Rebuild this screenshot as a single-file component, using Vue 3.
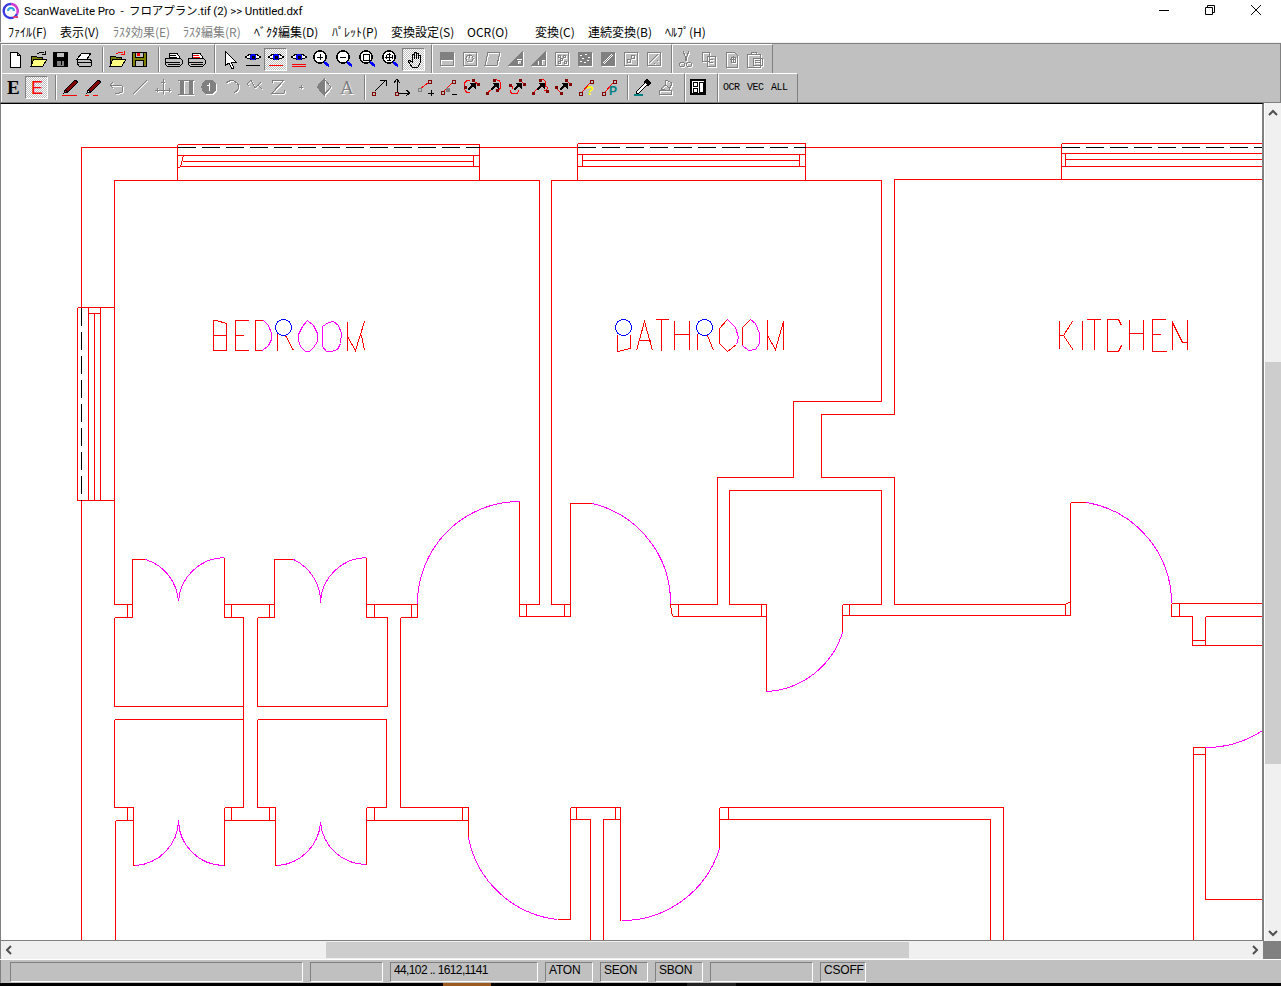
<script setup>
const P = (d, s = '#000', f = 'none', w = 1) => ({ d, s, f, w })
const K = (d, s = '#fff') => ({ d, s, f: 'none', w: 1, k: true })
const T = (t, x, y, size, f = '#000', weight = 400, fam = 'Liberation Sans') => ({ t, x, y, size, f, weight, fam })
const node = (x, y) => `M${x} ${y}h3v3h-3z`

const floppy = (body, dot) => [
  P('M2 3h14v14H2z', '#000', body), P('M5 3h8v5H5z', '#000', '#c0c0c0'), P('M5 11h8v6H5z', '#000', '#c0c0c0'),
  ...(dot ? [P('M7 4h2v2H7z', '#f00', '#f00')] : [P('M5 11h8v6H5zM10 12v4', '#000', '#808080')])
]
const folder = (c) => [
  P('M3 17V8l1-1h4l1 1h5v2', '#000', '#808000'), P('M3 17l3-7h13l-4 7z', '#000', '#ffff80'),
  P('M9 5q4-3 7-1M17 2v3h-3', c)
]
const printer = (c) => [
  P('M6 9V4h8l3 5', '#000', '#fff'), P('M7 6h6M7 8h7', c),
  P('M2 10l3-1h12l2 2v4l-2 2H4l-2-2z', '#000', '#c0c0c0'), P('M3 13h14M5 15h12', '#000')
]
const eye = (lines) => [
  P('M2 8q8-6 16 0q-8 5-16 0z', '#000', '#fff'), P('M10 5a3 3 0 1 0 .01 0z', '#00f', '#00f'),
  P('M9 7h2v2H9z', '#000', '#000'), ...lines
]
const lens = (inner) => [
  P('M8 2a6 6 0 1 0 .01 0z', '#000', '#fff', 1.5), P('M12 13l5 4', '#00f', 'none', 2.5), P(inner, '#000')
]
const curveArrow = (curve, nodes) => [
  P(curve, '#f00'), P(nodes, '#800000', '#800000'),
  P('M7 13L11 9', '#000', 'none', 2), P('M9 6h5v5z', '#000', '#000')
]
const redLine = [P(node(3, 15) + node(14, 3), '#800000'), P('M6 15L14 6', '#f00')]

const ic = {
  new: [P('M5 3h7l3 3v12H5zM12 3v3h3', '#000', '#fff')],
  open: folder('#000'), openr: folder('#f00'), save: floppy('#000'), saver: floppy('#808000', true),
  scan: [P('M3 10l5-6h9l-4 6z', '#000', '#fff'), P('M3 10h12l3 2-1 5H5l-2-3z', '#000', '#c0c0c0'), P('M4 13h13', '#000')],
  print: printer('#000'), print2: printer('#f00'),
  arrow: [P('M5 2v15l4-3 3 6 2-1-3-6h5z', '#000', '#fff')],
  eye1: eye([P('M3 16h14')]), eye2: eye([P('M3 16h14', '#f00')]), eye3: eye([P('M3 15h14M3 17h14', '#f00')]),
  zin: lens('M5 8h6M8 5v6'), zout: lens('M5 8h6'), zbox: lens('M5 5h6v6H5z'), zall: lens('M4 8h8M8 4v8M6 5h4M6 11h4M5 6v4M11 6v4'),
  hand: [P('M8 18l-4-6 1-1 3 2V5h2v5V3h2v7V4h2v6V6h2v8l-2 4z', '#000')],
  d1: [P('M3 3h13v7H3z', '#000', '#000'), P('M3 3h13v13H3z')],
  d2: [P('M3 3h13v13H3zM9.5 6a3.5 3.5 0 1 0 .01 0zM9 5v4')], d3: [P('M5 3h12l-3 13H2z')],
  d4: [P('M3 16L16 3v6h-6v7z', '#000', '#000'), P('M3 16h13V3M11 11h4v4h-4z')],
  d5: [P('M3 16L16 3v7h-4v6h-2v-5H8v5z', '#000', '#000'), P('M3 16h13V3')],
  d6: [P('M3 3h13v13H3zM6 6h2v2H6zM11 6h2v2h-2zM8 9h2v2H8zM6 12h2v2H6zM12 12h2v2h-2z')],
  d7: [P('M3 3h13v13H3z', '#000', '#000'), K('M5 6h2M10 5h2M13 8h2M7 9h2M12 11h2M5 12h2M9 13h2')],
  d8: [P('M3 3h13v13H3z', '#000', '#000'), K('M5 14L14 5M6 15L15 6')],
  d9: [P('M3 3h13v13H3zM10 6h3v3h-3zM6 10h3v3H6z')],
  d10: [P('M3 3h13v13H3zM5 14L14 5M10 14h1M13 11h1')],
  cut: [P('M7 2l4 10M13 2L9 12M6 13a2.5 2.5 0 1 0 .01 0zM13 13a2.5 2.5 0 1 0 .01 0z')],
  copy: [P('M3 3h7v9H3zM8 7h8v10H8zM10 10h4M10 13h4')],
  paste: [P('M4 3h8l3 3v12H4zM9 8h4v5H9zM11 7v7M8 10h6')],
  clip: [P('M2 5h13v13H2zM6 3h5v2H6zM8 9h9v7H8zM10 11h5M10 13h5')],
  ebold: [T('E', 3, 17, 19, '#000', 700, 'Liberation Serif')],
  ered: [T('E', 4, 17, 18, '#f00')],
  pen: [P('M4 13L14 3l3 2L7 15z', '#000', '#800000'), P('M4 13l-1 3 4-1z', '#000', '#f00'), P('M1 18h15', '#f00')],
  pen2: [P('M4 13L14 3l3 2L7 15z', '#000', '#800000'), P('M4 13l-1 3 4-1z', '#000', '#fff'), P('M1 18h4M9 18h5', '#f00')],
  undo: [P('M3 8h9q4 0 4 4t-4 4H8M6 5L3 8l3 3')], line: [P('M3 17L17 3')], cross: [P('M10 2v15M2 13h16M4 11v4M16 11v4M8 5h4')],
  rbar: [P('M4 3h3v14H4zM13 3h3v14h-3z', '#000', '#000'), P('M2 3h16M2 17h16')],
  circ: [P('M10 3a7 7 0 1 0 .01 0z', '#000', '#000'), K('M10 6v8M8 8h2')],
  arc: [P('M4 6q6-5 11 0t-3 10')], wave: [P('M2 7l4-4 4 8 3-3 4 4M2 7l2 2M13 8l3-3')],
  zed: [P('M4 3h12L4 16h12M4 3v3M16 16v-3')], plus: [P('M10 8v4M8 10h4')],
  diamond: [P('M10 2L3 10l7 8z', '#000', '#000'), P('M10 2l7 8-7 8')],
  aa: [T('A', 3, 17, 19, '#000', 400, 'Liberation Serif')],
  n1: [P(node(3, 15), '#800000'), P('M6 14L17 3M11 3h6v6')],
  n2: [P(node(3, 15), '#800000'), P('M5 15V3M6 16h12M2 6l3-4 3 4M14 13l4 3-4 3')],
  n3: [P(node(3, 11), '#808080'), P(node(13, 3), '#800000'), P('M6 11l7-5', '#f00'), P('M13 16h6M16 13v6')],
  n4: [P(node(3, 14), '#800000'), P(node(14, 3), '#800000'), P('M6 14l8-8', '#f00'), P('M8 11h3v3H8z', '#808080', '#808080'), P('M14 17h5')],
  c1: curveArrow('M9 3Q3 3 3 9Q3 16 9 16M11 3L17 7', 'M11 2h2v2h-2zM16 6h2v2h-2zM3 9h2v2H3z'),
  c2: curveArrow('M3 16L8 12M10 3Q17 2 17 8Q17 13 13 13', 'M2 15h2v2H2zM9 2h2v2H9zM12 12h2v2h-2z'),
  c3: curveArrow('M2 8Q6 8 6 12M3 13Q3 17 8 17Q12 17 11 13M13 3L17 7', 'M2 7h2v2H2zM12 2h2v2h-2zM16 6h2v2h-2z'),
  c4: curveArrow('M3 16L7 12M10 3Q15 1 16 6Q14 9 17 10Q18 14 14 14', 'M2 15h2v2H2zM9 2h2v2H9zM16 13h2v2h-2z'),
  c5: curveArrow('M2 10L7 15M13 3L17 7', 'M2 9h2v2H2zM7 15h2v2H7zM12 2h2v2h-2zM16 6h2v2h-2z'),
  n5: [...redLine, T('?', 10, 18, 13, '#ffff00', 700)],
  n6: [...redLine, T('P', 10, 18, 12, '#008080', 700)],
  dropper: [P('M11 5l3-3 4 4-3 3z', '#000', '#000'), P('M12 6l-8 8-1 3 3-1 8-8', '#000', '#fff'), P('M1 18h9', '#008080', 'none', 2)],
  stamp: [P('M10 3l6 3-2 5-5-3zM5 12l4-4 5 3-1 3zM3 13h12v4H3z')],
  layout: [P('M3 3h14v14H3z', '#000', '#fff', 2), P('M5 5h4v4H5zM5 11h4v4H5zM11 5h4v10h-4z', '#000', '#fff')]
}

const off = new Set(['d1', 'd2', 'd3', 'd4', 'd5', 'd6', 'd7', 'd8', 'd9', 'd10', 'cut', 'copy', 'paste', 'clip', 'undo', 'line', 'cross', 'rbar', 'circ', 'arc', 'wave', 'zed', 'plus', 'diamond', 'aa', 'stamp'])
const pressed = new Set(['eye2', 'hand', 'ered'])

const layers = (name) => {
  const items = ic[name]
  if (!off.has(name)) return [{ tf: null, items }]
  const tint = (c, keep) => items.filter((i) => keep || !i.k).map((i) => (i.k ? i : i.t ? { ...i, f: c } : { ...i, s: c, f: i.f === 'none' ? 'none' : c }))
  return [{ tf: 'translate(1 1)', items: tint('#fff', false) }, { tf: null, items: tint('#808080', true) }]
}

const sep = (w, at) => ({ sep: true, w, at })
const row1 = [
  { w: 214, pl: 2, items: ['new', 'open', 'save', 'scan', sep(10, 7), 'openr', 'saver', sep(10, 7), 'print', 'print2'] },
  { w: 217, pl: 3, items: ['arrow', 'eye1', 'eye2', 'eye3', 'zin', 'zout', 'zbox', 'zall', 'hand'] },
  { w: 240, pl: 3, items: ['d1', 'd2', 'd3', 'd4', 'd5', 'd6', 'd7', 'd8', 'd9', 'd10'] },
  { w: 101, pl: 2, items: ['cut', 'copy', 'paste', 'clip'] }
]
const row2 = [
  { w: 684, pl: 1, items: ['ebold', 'ered', sep(11, 7), 'pen', 'pen2', 'undo', 'line', 'cross', 'rbar', 'circ', 'arc', 'wave', 'zed', 'plus', 'diamond', 'aa', sep(9, 6), 'n1', 'n2', 'n3', 'n4', 'c1', 'c2', 'c3', 'c4', 'c5', 'n5', 'n6', sep(11, 7), 'dropper', 'stamp'] },
  { w: 33, pl: 1, items: ['layout'] }
]

const menu = [
  ['ﾌｧｲﾙ(F)', 8, 38], ['表示(V)', 60, 39], ['ﾗｽﾀ効果(E)', 113, 56, 1], ['ﾗｽﾀ編集(R)', 183, 57, 1], ['ﾍﾞｸﾀ編集(D)', 254, 64],
  ['ﾊﾟﾚｯﾄ(P)', 332, 45], ['変換設定(S)', 391, 62], ['OCR(O)', 467, 40], ['変換(C)', 535, 39], ['連続変換(B)', 588, 63], ['ﾍﾙﾌﾟ(H)', 665, 41]
].map(([t, x, w, dis], i, a) => ({ t, w, dis, gap: i ? x - a[i - 1][1] - a[i - 1][2] : 0 }))

const titleText = 'ScanWaveLite Pro  -  フロアプラン.tif (2) >> Untitled.dxf'
const status = [[293, ''], [73, ''], [148, '44,102 .. 1612,1141', 'tight'], [48, 'ATON'], [48, 'SEON'], [48, 'SBON'], [103, ''], [46, 'CSOFF']]

const walls = [
  'M81 307V147H177M479 147H577M805 147H1061M81 500V940',
  'M177 144H479V180M177 144V180M177 155H479M182 161H473M180 166H479M473 155V166M183 155L180 166L177 168',
  'M577 143H805V180M577 143V180M577 154H805M582 160H799M577 166H805M582 154V166M799 154V166',
  'M1061 143H1262M1061 143V179M1061 153H1262M1065 159H1262M1061 166H1262M1065 153V166',
  'M114 604V180H539V604M551 604V180H881V401H793V477H717V604M894 604V477H821V414H894V179H1262',
  'M77 307H114M77 307V500H114M88 307V500M94 313V500M100 307V500M88 313H100',
  'M114 604H132M127 604V617M114 617H132M132 617V559H145',
  'M224 557V617M224 604H274M231 604V617M224 617H243V807H224M114 617V706H243M114 719H243M114 719V807H133M127 807V820M115 820H133M115 820V940M133 807V865H135M224 807V865M231 807V820M224 820H275',
  'M269 604V617M257 617H274M274 617V559H293M257 617V706H387V617H366M366 557V617M366 604H417M374 604V617M411 604V617M400 617H417M417 604V617M400 617V807H468',
  'M257 719H386V807H366M257 719V807H275M269 807V820M275 807V865H277M366 807V864M374 807V820M366 820H468M462 807V820M468 807V837',
  'M519 501V616M519 604H539M526 604V616M519 616H570M564 604V616M570 616V503H592M551 604H570',
  'M670 604L672 616M670 604H717M678 604V616M672 616H766M761 604V616M729 604H766M729 604V490H881V604H842M766 604V691M842 604V632M849 604V615M842 615H1070M1070 502V615M1070 502H1086M894 604H1065M1065 604V615M1065 604L1070 601',
  'M1171 603H1262M1171 603V616M1179 603V616M1171 616H1192V645H1262M1192 640H1205M1205 616V645M1205 616H1262',
  'M1193 940V747H1205V899H1262M1193 754H1205',
  'M570 807H620M570 807V919H557M576 807V819M570 819H590V940M603 940V819H620M615 807V819M620 807V920M719 807V848M719 807H1003V940M728 807V819M719 819H990V940',
  'M213 350V320H216L226 323V350H213M213 335H226M248 320H235V350H248M235 335H243M263 320H255V350H262M277 333V350M285 335L293 350M347 321V350M347 336L355 350L364 321M361 335L364 350',
  'M617 334V351L630 348V334M636 350L644 321L652 350M638 340H650M655 319H668M661 319V350M674 320V349M689 320V349M674 334H689M697 333V349M707 335L713 350M727 319L719 328V343L727 351L736 344M742 345V327L750 319M767 319V349M767 335L775 349L783 321V349',
  'M1059 320V348M1059 335H1063L1072 321M1063 335L1073 350M1082 320V349M1086 319H1100M1094 319V349M1118 319H1107V351H1118L1121 345M1118 319L1121 325M1129 319V349M1143 319V349M1129 333H1143M1165 319H1152V351H1166M1152 334H1160M1172 320V349M1172 322L1182 342H1187M1187 319V349'
].join('')

const arcs = [
  'M145 559A47 47 0 0 1 178 601', 'M224 557A47 47 0 0 0 178 600', 'M293 559A47 47 0 0 1 320 603', 'M366 557A47 47 0 0 0 320 600',
  'M135 865A46 46 0 0 0 178 820', 'M224 865A46 46 0 0 1 178 820', 'M277 865A46 46 0 0 0 320 822', 'M366 864A46 46 0 0 1 320 822',
  'M417 604A102 102 0 0 1 519 501', 'M592 503A102 102 0 0 1 670 604', 'M766 691A84 84 0 0 0 842 632', 'M1086 502A102 102 0 0 1 1171 603',
  'M1205 747A102 102 0 0 0 1262 730', 'M468 837A102 102 0 0 0 557 919', 'M622 920A102 102 0 0 0 719 848',
  'M263 320L268 325L271 333V339L268 345L262 350', 'M307 320L313 325L317 333V341L313 347L309 351H305L300 346L298 340V334L302 326Z',
  'M322 326L328 322L333 321L338 325L341 333L340 343L337 349L331 351H326L322 346V326Z', 'M727 319L735 327L738 337L736 344', 'M750 319L755 323L759 333V343L755 349L748 350L742 345'
].join('')

const dashes = 'M177 147H479M577 147H805M1061 147H1262M81 307V500'
const circles = [[283, 327, 8], [623, 327, 8], [704, 327, 8]]
</script>

<template>
  <div class="window">
    <header class="title">
      <svg class="logo" width="18" height="18" viewBox="0 0 18 18">
        <path d="M9 2a7 7 0 1 0 6 10" fill="none" stroke="#3a3adf" stroke-width="2.5" />
        <path d="M9 2a7 7 0 0 1 6 10" fill="none" stroke="#d040d0" stroke-width="2.5" />
        <path d="M6 9a3 3 0 0 1 6 0" fill="none" stroke="#30a0e0" stroke-width="2" />
        <path d="M11 15h5" stroke="#e04080" stroke-width="2" />
      </svg>
      <span class="title-text">{{ titleText }}</span>
      <div class="controls">
        <svg width="10" height="10" viewBox="0 0 10 10"><path d="M0 5.5h10" stroke="#000" /></svg>
        <svg width="10" height="10" viewBox="0 0 10 10"><path d="M.5 2.5h7v7h-7zM2.5 2.5v-2h7v7h-2" fill="none" stroke="#000" /></svg>
        <svg width="10" height="10" viewBox="0 0 10 10"><path d="M0 0l10 10M10 0L0 10" fill="none" stroke="#000" /></svg>
      </div>
    </header>

    <nav class="menu">
      <span v-for="m in menu" :key="m.t" class="menu-item" :class="{ dis: m.dis }" :style="{ width: m.w + 'px', marginLeft: m.gap + 'px' }">{{ m.t }}</span>
    </nav>

    <section class="toolbars">
      <div class="bar">
        <div v-for="(g, gi) in row1" :key="gi" class="group" :style="{ width: g.w + 'px', paddingLeft: g.pl + 'px' }">
          <template v-for="(it, i) in g.items" :key="i">
            <span v-if="it.sep" class="sep" :style="{ width: it.w + 'px', paddingLeft: it.at + 'px' }"><i></i></span>
            <span v-else class="btn" :class="{ on: pressed.has(it) }">
              <svg class="ico" width="20" height="20" viewBox="0 0 20 20">
                <g v-for="(l, li) in layers(it)" :key="li" :transform="l.tf">
                  <template v-for="(p, pi) in l.items" :key="pi">
                    <text v-if="p.t" :x="p.x" :y="p.y" :font-size="p.size" :font-weight="p.weight" :font-family="p.fam" :fill="p.f">{{ p.t }}</text>
                    <path v-else :d="p.d" :stroke="p.s" :fill="p.f" :stroke-width="p.w" shape-rendering="crispEdges" />
                  </template>
                </g>
              </svg>
            </span>
          </template>
        </div>
      </div>
      <div class="bar second">
        <div v-for="(g, gi) in row2" :key="gi" class="group" :style="{ width: g.w + 'px', paddingLeft: g.pl + 'px' }">
          <template v-for="(it, i) in g.items" :key="i">
            <span v-if="it.sep" class="sep" :style="{ width: it.w + 'px', paddingLeft: it.at + 'px' }"><i></i></span>
            <span v-else class="btn" :class="{ on: pressed.has(it) }">
              <svg class="ico" width="20" height="20" viewBox="0 0 20 20">
                <g v-for="(l, li) in layers(it)" :key="li" :transform="l.tf">
                  <template v-for="(p, pi) in l.items" :key="pi">
                    <text v-if="p.t" :x="p.x" :y="p.y" :font-size="p.size" :font-weight="p.weight" :font-family="p.fam" :fill="p.f">{{ p.t }}</text>
                    <path v-else :d="p.d" :stroke="p.s" :fill="p.f" :stroke-width="p.w" shape-rendering="crispEdges" />
                  </template>
                </g>
              </svg>
            </span>
          </template>
        </div>
        <div class="group textgroup">
          <span>OCR</span><span>VEC</span><span>ALL</span>
        </div>
      </div>
    </section>

    <main class="work">
      <div class="canvas">
        <svg class="plan" width="1261" height="836" viewBox="1 104 1261 836">
          <g transform="translate(.5 .5)" fill="none" shape-rendering="crispEdges">
            <path :d="walls" stroke="#f00" />
            <path :d="dashes" stroke="#000" stroke-dasharray="18 6" />
            <path :d="arcs" stroke="#f0f" />
            <circle v-for="c in circles" :key="c[0]" :cx="c[0]" :cy="c[1]" :r="c[2]" stroke="#00f" />
          </g>
        </svg>
      </div>
      <aside class="vscroll">
        <span class="arrow up"><svg width="10" height="8" viewBox="0 0 10 8"><path d="M1 6l4-4 4 4" fill="none" stroke="#505050" stroke-width="2" /></svg></span>
        <div class="vtrack"><div class="vthumb"></div></div>
        <span class="arrow"><svg width="10" height="8" viewBox="0 0 10 8"><path d="M1 2l4 4 4-4" fill="none" stroke="#505050" stroke-width="2" /></svg></span>
      </aside>
    </main>

    <div class="hscroll">
      <span class="harrow"><svg width="8" height="10" viewBox="0 0 8 10"><path d="M6 1L2 5l4 4" fill="none" stroke="#505050" stroke-width="2" /></svg></span>
      <div class="htrack"><div class="hthumb"></div></div>
      <span class="harrow"><svg width="8" height="10" viewBox="0 0 8 10"><path d="M2 1l4 4-4 4" fill="none" stroke="#505050" stroke-width="2" /></svg></span>
      <span class="corner"></span>
    </div>

    <footer class="status">
      <span v-for="(s, i) in status" :key="i" class="cell" :class="s[2]" :style="{ width: s[0] + 'px' }">{{ s[1] }}</span>
    </footer>

    <div class="taskbar"><i class="tb-a"></i><i class="tb-b"></i></div>
  </div>
</template>

<style>
html, body { margin: 0; background: #fff; }
</style>

<style scoped>
.window {
  width: 1281px; height: 986px; display: flex; flex-direction: column; overflow: hidden; background: #fff;
  box-sizing: border-box; font-family: "Noto Sans", "Noto Sans CJK JP", sans-serif; color: #000;
}
.title { height: 22px; flex: none; display: flex; align-items: center; position: relative; padding-left: 2px; box-shadow: inset 1px 0 #808080; }
.logo { flex: none; margin-right: 4px; }
.title-text { font: 11.5px Roboto, "Noto Sans CJK JP", sans-serif; letter-spacing: -0.1px; white-space: pre; margin-top: -2px; }
.controls { margin-left: auto; display: flex; align-items: center; padding-right: 20px; gap: 36px; margin-top: -2px; }
.menu { height: 20px; flex: none; display: flex; align-items: center; padding: 0 0 2px 8px; box-sizing: border-box; font-size: 12px; font-family: "Noto Sans CJK JP", "Noto Sans", sans-serif; box-shadow: inset 1px 0 #808080; }
.menu-item { white-space: nowrap; flex: none; overflow: visible; }
.dis { color: #808080; text-shadow: 1px 1px 0 #fff; }
.toolbars { flex: none; height: 61px; box-sizing: border-box; background: #c0c0c0; border-top: 1px solid #f0f0f0; display: flex; flex-direction: column; box-shadow: inset 0 1px #808080, inset 1px 0 #808080, inset -1px 0 #808080, inset 0 -1px #808080; padding: 1px 0 1px 1px; }
.bar { height: 29px; display: flex; flex: none; }
.group { box-sizing: border-box; height: 29px; display: flex; align-items: center; border-top: 1px solid #fff; border-right: 1px solid #808080; flex: none; box-shadow: inset 1px 0 #fff; }
.second .group { padding-bottom: 2px; }
.btn { width: 23px; height: 23px; flex: none; display: flex; align-items: center; justify-content: center; box-sizing: border-box; }
.btn.on { background: repeating-conic-gradient(#fff 0 25%, #c0c0c0 0 50%) 0 0 / 2px 2px; border: 1px solid; border-color: #808080 #fff #fff #808080; }
.ico { overflow: visible; }
.sep { height: 25px; flex: none; box-sizing: border-box; display: block; }
.sep i { display: block; width: 1px; height: 25px; background: #808080; box-shadow: 1px 0 #fff; }
.textgroup { width: 80px; font: 10px "Liberation Mono", monospace; letter-spacing: -0.5px; gap: 7.5px; padding-left: 5px; }
.work { flex: 1; min-height: 0; display: flex; }
.canvas { flex: none; width: 1264px; box-sizing: border-box; border-top: 1px solid #000; border-left: 1px solid #808080; border-right: 2px solid #808080; border-bottom: 1px solid #808080; overflow: hidden; background: #fff; }
.plan { display: block; }
.vscroll { flex: 1; background: #f0f0f0; display: flex; flex-direction: column; margin-left: 1px; }
.arrow { height: 17px; flex: none; display: flex; align-items: center; justify-content: center; }
.arrow.up { height: 20px; }
.vtrack { flex: 1; padding-top: 239px; }
.vthumb { height: 402px; background: #cdcdcd; }
.hscroll { height: 18px; flex: none; display: flex; background: #f0f0f0; box-shadow: inset 1px 0 #808080; }
.harrow { width: 17px; flex: none; display: flex; align-items: center; justify-content: center; }
.htrack { flex: 1; padding: 1px 0 1px 309px; }
.hthumb { width: 583px; height: 16px; background: #cdcdcd; }
.corner { width: 18px; flex: none; background: #808080; }
.status { height: 24px; flex: none; box-sizing: border-box; background: #c0c0c0; border-top: 1px solid #fff; display: flex; gap: 7px; padding: 2px 0 0 10px; align-items: flex-start; box-shadow: inset 1px 0 #808080; }
.cell { height: 20px; box-sizing: border-box; flex: none; border: 1px solid; border-color: #808080 #fff #fff #808080; font: 12px/15px "Liberation Sans", sans-serif; letter-spacing: -0.2px; padding-left: 3px; white-space: nowrap; overflow: hidden; }
.tight { letter-spacing: -0.63px; padding-left: 3px; }
.taskbar { height: 3px; flex: none; background: #000; display: flex; }
.tb-a { margin-left: 443px; width: 48px; background: #9a5a20; }
.tb-b { margin-left: 196px; width: 49px; background: #222; }
</style>
